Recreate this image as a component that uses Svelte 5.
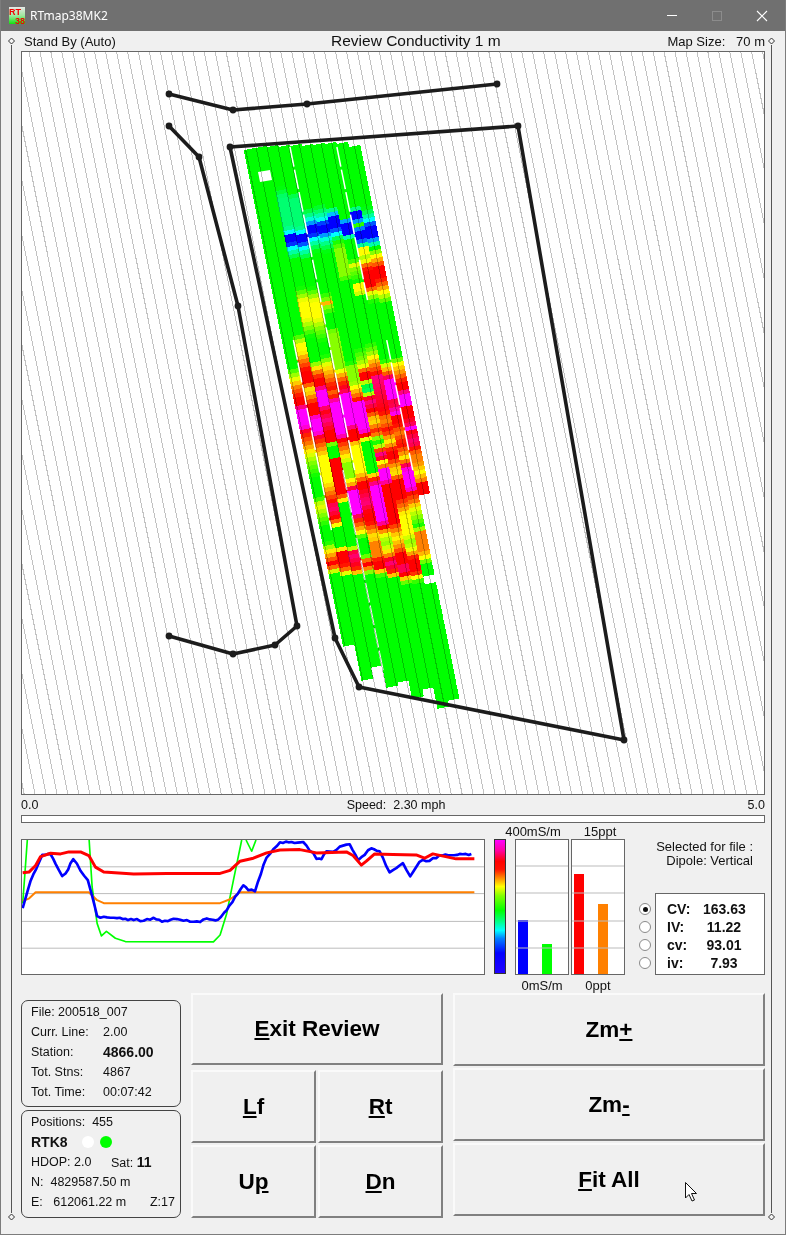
<script>
  const V = { b: 0, c: 0.17, t: 0.26, g: 0.33, l: 0.42, y: 0.5, o: 0.6, r: 0.7, p: 0.8, m: 0.9 };
  const COLS = [
    "149 g 365 g 372 l 378 y 385 o 395 r 402 r 408 m 424 m 430 r 442 o 450 y 460 l 475 g 495 g 503 y 512 l 525 g 540 g 548 y 555 o 561 r 566 o 572 g 643 g",
    "147 g 332 g 342 y 350 y 358 o 368 r 380 r 388 y 395 o 402 r 412 r 416 m 430 m 436 r 445 o 455 y 480 y 490 o 500 r 505 p 515 r 520 o 523 y 527 g 545 g 549 r 562 r 568 o 575 g 676 g",
    "146 g 185 g 195 t 225 t 230 c 233 b 241 b 246 c 252 t 258 g 285 g 293 l 299 y 316 y 325 l 335 g 358 g 365 y 370 o 376 r 384 r 388 m 403 m 408 r 418 p 430 r 438 r 443 g 455 g 458 r 490 r 496 o 502 g 545 g 548 r 552 p 565 r 569 o 574 g 666 g",
    "146 g 190 g 196 t 225 t 230 c 234 b 240 b 246 c 252 t 258 g 285 g 293 l 299 y 316 y 325 l 340 g 353 g 363 y 375 o 385 r 392 o 400 m 432 m 438 r 447 o 455 y 462 l 475 l 478 y 484 o 488 m 510 m 516 r 524 o 530 y 536 g 553 g 557 o 562 r 566 o 572 g 686 g",
    "145 g 205 g 212 t 219 c 224 b 232 b 237 c 243 t 250 g 290 g 298 l 302 o 305 l 312 g 325 g 330 l 352 l 365 l 375 o 383 r 392 p 393 m 422 m 428 r 438 r 442 y 470 y 476 o 480 r 485 r 500 p 510 r 520 r 535 y 540 o 553 o 558 r 565 r 570 y 574 g 680 g",
    "145 g 202 g 210 t 218 c 222 b 230 b 235 c 242 t 250 g 360 g 365 l 380 l 385 y 392 o 398 r 400 m 428 m 433 r 440 g 470 g 474 o 478 r 484 m 518 m 525 r 532 y 540 l 548 y 553 o 556 r 560 p 568 r 572 o 577 g 697 g",
    "144 g 205 g 211 c 215 b 226 b 232 c 238 g 248 l 273 l 280 g 345 g 358 l 365 y 370 r 378 r 381 g 387 t 391 g 394 r 400 p 408 r 414 o 418 y 424 o 430 r 436 l 441 g 445 y 449 r 452 p 458 r 460 y 464 o 466 m 478 m 483 r 520 r 528 o 535 y 545 o 552 r 560 r 566 p 572 r 577 y 582 g 688 g",
    "143 g 215 g 221 b 231 b 237 g 258 g 262 y 266 l 280 g 283 y 290 y 295 g 340 g 350 l 355 y 363 o 372 r 375 p 410 r 416 o 420 o 428 r 434 o 438 y 444 o 448 r 456 r 462 o 470 y 478 r 495 r 505 o 512 y 532 y 540 l 548 y 552 o 556 r 570 r 575 y 580 g 706 g",
    "143 g 206 g 210 b 218 b 222 l 226 c 228 b 237 b 242 c 247 y 252 y 257 l 262 o 268 r 285 r 290 y 295 l 300 g 358 g 364 y 370 o 376 p 378 m 396 m 400 r 405 p 412 m 414 r 422 r 430 o 442 r 450 o 456 y 464 p 468 m 486 m 490 r 500 o 505 y 515 l 525 g 530 o 548 o 555 y 562 g 575 g 575 x 583 x 583 g 698 g",
    "146 g 205 g 212 t 218 c 224 b 235 b 240 c 246 g 250 l 254 y 260 o 266 r 276 r 284 o 290 y 296 l 302 g 355 g 362 y 372 o 380 r 388 r 392 m 402 m 406 r 415 r 425 p 426 m 428 r 440 p 445 r 452 o 460 o 470 y 478 o 482 r 493 r"
  ];
  const COS = 0.196, COLW = 11.5;

  function ramp(v) {
    const stops = [[0, 0, 0, 255], [0.17, 0, 255, 255], [0.33, 0, 255, 0], [0.5, 255, 255, 0], [0.7, 255, 0, 0], [0.9, 255, 0, 255]];
    for (let i = 1; i < stops.length; i++) {
      if (v <= stops[i][0]) {
        const a = stops[i - 1], b = stops[i], f = (v - a[0]) / (b[0] - a[0]);
        return `rgb(${Math.round(a[1] + (b[1] - a[1]) * f)},${Math.round(a[2] + (b[2] - a[2]) * f)},${Math.round(a[3] + (b[3] - a[3]) * f)})`;
      }
    }
    return "rgb(255,0,255)";
  }

  const toW = (y, u) => (y - 147 + COS * u) / 0.98;

  const cells = [];
  COLS.forEach((s, i) => {
    const t = s.split(" ");
    const keys = [];
    for (let k = 0; k < t.length; k += 2) keys.push([+t[k], t[k + 1]]);
    const u = 3 + COLW * i, mid = u + COLW / 2;
    const last = keys[keys.length - 1][0];
    let seg = 0;
    for (let y = keys[0][0]; y < last; y += 4) {
      while (seg < keys.length - 2 && y >= keys[seg + 1][0]) seg++;
      const a = keys[seg], b = keys[seg + 1];
      if (a[1] === "x" || b[1] === "x") continue;
      const f = b[0] === a[0] ? 0 : (y - a[0]) / (b[0] - a[0]);
      const v = V[a[1]] + (V[b[1]] - V[a[1]]) * f;
      cells.push({ x: u, y: toW(y, mid), w: COLW + 0.4, h: 4.4, fill: ramp(v) });
    }
  });

  const seps = [[49, 147, 470], [95, 147, 300], [14.5, 340, 530], [106, 340, 470], [37.5, 470, 670]]
    .map(([u, a, b]) => ({ u, w0: toW(a, u), w1: toW(b, u) }));

  const hatch = [];
  for (let k = -60; k < 26; k++) {
    const x = 510.8 + 10.95 * k;
    hatch.push({ x1: x, x2: x + 0.2 * 744 });
  }

  const dots = [[169, 94], [233, 110], [307, 104], [497, 84], [230, 147], [518, 126], [624, 740], [359, 687], [335, 638],
    [169, 126], [199, 157], [238, 306], [297, 626], [275, 645], [233, 654], [169, 636]];

  const blueKeys = [[66,355],[90,270],[115,215],[125,195],[150,190],[165,220],[185,257],[195,250],[218,203],[240,240],[262,270],[275,320],[290,380],[320,382],[350,384],[400,388],[430,392],[460,384],[485,395],[520,386],[560,392],[590,396],[620,386],[655,390],[680,360],[705,320],[730,285],[745,300],[765,300],[800,200],[840,155],[910,155],[940,190],[950,205],[965,205],[980,180],[1000,185],[1020,168],[1050,160],[1075,210],[1115,172],[1140,182],[1170,247],[1210,218],[1232,260],[1260,212],[1290,210],[1320,195],[1425,190]];
  const bluePts = [];
  blueKeys.forEach((p, i) => {
    if (i === 0) return;
    const a = blueKeys[i - 1], n = Math.max(1, Math.round((p[0] - a[0]) / 9));
    for (let j = 0; j < n; j++) {
      const f = j / n, x = a[0] + (p[0] - a[0]) * f;
      const noise = 3 * Math.sin(x * 0.61) * Math.cos(x * 0.23);
      bluePts.push(`${x.toFixed(0)},${(a[1] + (p[1] - a[1]) * f + noise).toFixed(0)}`);
    }
  });
  const blue = bluePts.join(" ");

  const readings = [["CV:", "163.63", true], ["IV:", "11.22", false], ["cv:", "93.01", false], ["iv:", "7.93", false]];
  const gridY = [26, 53, 81, 108];
</script>

<div class="window">
  <header class="titlebar">
    <svg class="appicon" viewBox="0 0 16 17" width="16" height="17" aria-hidden="true">
      <defs>
        <linearGradient id="ic" x1="0" y1="0" x2="0" y2="1">
          <stop offset="0" stop-color="#e8e8e8" />
          <stop offset="0.5" stop-color="#9fe89f" />
          <stop offset="1" stop-color="#10e010" />
        </linearGradient>
      </defs>
      <rect width="16" height="17" fill="url(#ic)" />
      <text x="0" y="8" class="ictext">RT</text>
      <text x="6" y="16.5" class="ictext">38</text>
    </svg>
    <span class="apptitle">RTmap38MK2</span>
    <div class="winbtns">
      <svg width="12" height="12" viewBox="0 0 12 12" aria-hidden="true"><path d="M1 5.5H11" stroke="#fff" stroke-width="1" /></svg>
      <svg width="12" height="12" viewBox="0 0 12 12" aria-hidden="true"><rect x="1.5" y="1.5" width="9" height="9" fill="none" stroke="#8c8c8c" /></svg>
      <svg width="12" height="12" viewBox="0 0 12 12" aria-hidden="true"><path d="M1 1L11 11M11 1L1 11" stroke="#fff" stroke-width="1.1" /></svg>
    </div>
  </header>

  <main class="content">
    <div class="status">
      <span class="standby">Stand By (Auto)</span>
      <span class="maptitle">Review Conductivity 1 m</span>
      <span class="mapsize">Map Size: &nbsp;&nbsp;70 m</span>
    </div>

    <svg class="map" viewBox="22 52 742 742" aria-label="Map">
      <g transform="translate(240 147) rotate(-11.31)" shape-rendering="crispEdges">
        {#each cells as c}
          <rect x={c.x} y={c.y} width={c.w} height={c.h} fill={c.fill} />
        {/each}
      </g>
      <g transform="translate(240 147) rotate(-11.31)">
        {#each seps as s}
          <line x1={s.u} x2={s.u} y1={s.w0} y2={s.w1} class="sep" />
        {/each}
      </g>
      <polygon points="258,172 270,170 272,180 260,182" fill="#fff" />
      <g class="hatch" shape-rendering="crispEdges">
        {#each hatch as h}
          <line x1={h.x1} y1="52" x2={h.x2} y2="796" />
        {/each}
      </g>
      <g class="track">
        <polyline points="169,94 233,110 307,104 497,84" />
        <polygon points="230,147 518,126 624,740 359,687 335,638" />
        <polyline points="169,126 199,157 238,306 297,626 275,645 233,654 169,636" />
      </g>
      {#each dots as d}
        <circle cx={d[0]} cy={d[1]} r="3.4" fill="#1c1c1c" />
      {/each}
    </svg>

    <div class="speedrow">
      <span>0.0</span>
      <span class="speed">Speed: &nbsp;2.30 mph</span>
      <span>5.0</span>
    </div>
    <div class="speedbar"></div>

    <section class="charts">
      <svg class="chart" viewBox="64 148 1390 405" preserveAspectRatio="none" aria-label="Trend chart">
        <g class="gl">
          <line x1="64" x2="1454" y1="229" y2="229" />
          <line x1="64" x2="1454" y1="310" y2="310" />
          <line x1="64" x2="1454" y1="394" y2="394" />
          <line x1="64" x2="1454" y1="475" y2="475" />
        </g>
        <polyline class="tr green" points="66,340 72,260 80,148" />
        <polyline class="tr green" points="266,148 275,290 290,400 303,438 318,424 345,445 375,455 640,456 660,435 680,370 700,270 725,148" />
        <polyline class="tr green" points="738,148 755,182 768,148" />
        <polyline class="tr orange" points="66,332 85,325 105,306 265,306 290,330 310,339 660,339 690,327 720,306 1425,306" />
        <polyline class="tr blue" points={blue} />
        <polyline class="tr red" points="66,247 85,245 105,225 120,198 150,188 180,190 205,184 240,184 265,195 285,230 310,245 400,251 500,249 660,249 690,240 720,212 760,203 800,187 840,178 900,177 950,187 1040,184 1060,195 1085,224 1100,212 1125,190 1180,192 1250,193 1275,203 1300,190 1370,205 1425,205" />
      </svg>

      <div class="barsblock">
        <div class="toplabels"><span class="lab400">400mS/m</span><span class="lab15">15ppt</span></div>
        <div class="barsrow">
          <div class="colorbar"></div>
          <svg class="barpanel first" viewBox="0 0 52 134" aria-hidden="true">
            <rect x="2" y="80" width="10" height="54" fill="#0000ff" />
            <rect x="26" y="104" width="10" height="30" fill="#00ff00" />
            {#each gridY as y}<line x1="0" x2="52" y1={y} y2={y} class="barline" />{/each}
          </svg>
          <svg class="barpanel" viewBox="0 0 52 134" aria-hidden="true">
            <rect x="2" y="34" width="10" height="100" fill="#ff0000" />
            <rect x="26" y="64" width="10" height="70" fill="#ff8000" />
            {#each gridY as y}<line x1="0" x2="52" y1={y} y2={y} class="barline" />{/each}
          </svg>
        </div>
        <div class="botlabels"><span>0mS/m</span><span>0ppt</span></div>
      </div>

      <div class="selected">
        <div class="seltext">Selected for file :<br />Dipole: Vertical</div>
        <div class="readrow">
          <div class="radios">
            {#each readings as r}
              <span class="radio" class:on={r[2]}></span>
            {/each}
          </div>
          <div class="readout">
            {#each readings as r}
              <span class="rl">{r[0]}</span><span class="rv">{r[1]}</span>
            {/each}
          </div>
        </div>
      </div>
    </section>

    <section class="bottom">
      <div class="panels">
        <div class="panel">
          <div class="row"><span>File:&nbsp;200518_007</span></div>
          <div class="row"><span class="k">Curr. Line:</span><span>2.00</span></div>
          <div class="row"><span class="k">Station:</span><b class="big">4866.00</b></div>
          <div class="row"><span class="k">Tot. Stns:</span><span>4867</span></div>
          <div class="row"><span class="k">Tot. Time:</span><span>00:07:42</span></div>
        </div>
        <div class="panel tall">
          <div class="row"><span>Positions: &nbsp;455</span></div>
          <div class="row rtk"><b>RTK8</b><i class="led white"></i><i class="led lime"></i></div>
          <div class="row"><span class="hdop">HDOP: 2.0</span><span>Sat:&nbsp;<b class="big">11</b></span></div>
          <div class="row"><span>N: &nbsp;4829587.50 m</span></div>
          <div class="row between"><span>E: &nbsp;&nbsp;612061.22 m</span><span>Z:17</span></div>
        </div>
      </div>

      <div class="padgrid">
        <button class="btn wide"><u>E</u>xit Review</button>
        <button class="btn"><u>L</u>f</button>
        <button class="btn"><u>R</u>t</button>
        <button class="btn"><span>U<u>p</u></span></button>
        <button class="btn"><u>D</u>n</button>
      </div>

      <div class="zoomcol">
        <button class="btn">Zm<u>+</u></button>
        <button class="btn">Zm<u>-</u></button>
        <button class="btn"><u>F</u>it All</button>
      </div>
    </section>
  </main>

  <svg class="overlay" viewBox="0 0 786 1235" aria-hidden="true">
    <g class="rail">
      <line x1="11.5" x2="11.5" y1="45" y2="1213" />
      <line x1="771.5" x2="771.5" y1="45" y2="1213" />
      <path d="M11.5 38 L14.5 41 L11.5 44 L8.5 41Z" />
      <path d="M771.5 38 L774.5 41 L771.5 44 L768.5 41Z" />
      <path d="M11.5 1214 L14.5 1217 L11.5 1220 L8.5 1217Z" />
      <path d="M771.5 1214 L774.5 1217 L771.5 1220 L768.5 1217Z" />
    </g>
    <path d="M685.5 1182.5 V1198 L689 1194.5 L692 1201 L694.5 1200 L691.5 1193.5 H696.5 Z" fill="#fff" stroke="#111" stroke-width="1" />
  </svg>
</div>

<style>
  :global(body) { margin: 0; background: #f0f0f0; }
  .window {
    position: relative;
    width: 786px;
    height: 1235px;
    box-sizing: border-box;
    border: 1px solid #7c7c7c;
    border-top: 0;
    background: #f0f0f0;
    color: #111;
    font-family: "Liberation Sans", Arial, sans-serif;
    font-size: 12.5px;
    overflow: hidden;
  }
  .titlebar {
    height: 31px;
    background: #707070;
    display: flex;
    align-items: center;
    padding-left: 9px;
    padding-right: 18px;
    margin: 0 -1px;
    color: #fff;
  }
  .appicon { margin-right: 5px; }
  .ictext { font: bold 9px "Liberation Sans", sans-serif; fill: #f00000; }
  .apptitle { font-family: "Noto Sans", sans-serif; font-size: 12px; }
  .winbtns { margin-left: auto; display: flex; gap: 33px; }
  .content { padding: 0 20px; }
  .status {
    height: 20px;
    display: grid;
    grid-template-columns: 310px 1fr auto;
    align-items: center;
    font-size: 13px;
  }
  .standby { padding-left: 3px; }
  .maptitle { font-size: 15.5px; }
  .map {
    display: block;
    width: 744px;
    height: 744px;
    box-sizing: border-box;
    border: 1px solid #666;
    background: #fff;
  }
  .sep { stroke: #fff; stroke-width: 1.5; stroke-dasharray: 20 3; }
  .hatch { mix-blend-mode: multiply; }
  .hatch line { stroke: #c2c2c2; stroke-width: 1; }
  .track polyline, .track polygon { fill: none; stroke: #1c1c1c; stroke-width: 3.6; stroke-linejoin: round; }
  .speedrow {
    height: 20px;
    display: grid;
    grid-template-columns: 1fr auto 1fr;
    align-items: center;
    font-size: 12.5px;
  }
  .speedrow span:last-child { text-align: right; }
  .speed { margin-left: 6px; }
  .speedbar {
    height: 8px;
    box-sizing: border-box;
    border: 1px solid #666;
    background: #fff;
  }
  .charts {
    height: 170px;
    display: flex;
    align-items: flex-start;
  }
  .chart {
    display: block;
    flex: none;
    width: 464px;
    height: 136px;
    margin-top: 16px;
    box-sizing: border-box;
    border: 1px solid #666;
    background: #fff;
  }
  .gl line { stroke: #bbb; stroke-width: 3; }
  .tr { fill: none; stroke-linejoin: round; }
  .green { stroke: #00ff00; stroke-width: 5; }
  .orange { stroke: #ff8000; stroke-width: 6; }
  .blue { stroke: #0000ff; stroke-width: 8; }
  .red { stroke: #ff0000; stroke-width: 9; }
  .barsblock { margin-left: 9px; flex: none; width: 131px; font-size: 13px; }
  .toplabels { display: flex; height: 16px; align-items: center; padding-top: 1px; box-sizing: border-box; }
  .lab400 { flex: none; width: 78px; text-align: center; }
  .lab15 { flex: none; width: 56px; text-align: center; }
  .barsrow { display: flex; align-items: flex-start; }
  .colorbar {
    flex: none;
    width: 12px;
    height: 135px;
    box-sizing: border-box;
    border: 1px solid #333;
    margin-right: 9px;
    background: linear-gradient(to bottom, #ff00ff 0%, #ff00a0 8%, #ff0000 16%, #ff1000 22%, #ff8000 28%, #ffff00 35%, #80ff00 42%, #00ff00 53%, #00ff80 61%, #00ffff 68%, #0080ff 74%, #0000ff 85%, #2000ff 100%);
  }
  .barpanel {
    display: block;
    flex: none;
    width: 54px;
    height: 136px;
    box-sizing: border-box;
    border: 1px solid #666;
    background: #fff;
  }
  .barpanel.first { margin-right: 2px; }
  .barline { stroke: #bbb; stroke-width: 1; }
  .botlabels { display: flex; height: 20px; align-items: center; padding-left: 20px; }
  .botlabels span { flex: none; width: 56px; text-align: center; }
  .selected { margin-left: 14px; flex: none; width: 126px; font-size: 13px; }
  .seltext { margin-top: 17px; height: 53px; line-height: 14px; text-align: right; padding-right: 12px; }
  .readrow { display: flex; }
  .radios { flex: none; width: 16px; padding-top: 10px; display: flex; flex-direction: column; }
  .radio {
    flex: none;
    box-sizing: border-box;
    width: 12px;
    height: 12px;
    margin-bottom: 6px;
    border-radius: 50%;
    border: 1px solid #8a8a8a;
    background: #fff;
    display: flex;
    align-items: center;
    justify-content: center;
  }
  .radio.on::after { content: ""; width: 5px; height: 5px; border-radius: 50%; background: #111; }
  .readout {
    flex: none;
    width: 110px;
    height: 82px;
    box-sizing: border-box;
    border: 1px solid #666;
    background: #fff;
    padding: 6px 0 0 11px;
    display: grid;
    grid-template-columns: 36px 42px;
    grid-auto-rows: 18px;
    align-items: center;
    font-weight: bold;
    font-size: 14px;
  }
  .rv { text-align: center; }
  .bottom { display: flex; gap: 10px; }
  .panels { flex: none; width: 160px; margin-top: 7px; display: flex; flex-direction: column; gap: 3px; }
  .panel {
    height: 107px;
    box-sizing: border-box;
    border: 1px solid #444;
    border-radius: 7px;
    padding: 1px 5px 0 9px;
  }
  .panel.tall { height: 108px; }
  .row { height: 20px; display: flex; align-items: center; white-space: nowrap; }
  .k { width: 72px; }
  .big { font-size: 14px; }
  .rtk b { font-size: 14px; width: 51px; }
  .led { width: 12px; height: 12px; border-radius: 50%; margin-right: 6px; }
  .white { background: #fff; }
  .lime { background: #00ff00; }
  .hdop { width: 80px; }
  .between { justify-content: space-between; }
  .padgrid {
    flex: none;
    width: 252px;
    display: grid;
    grid-template-columns: 125px 125px;
    grid-template-rows: 75px 73px 73px;
    column-gap: 2px;
    row-gap: 2px;
  }
  .padgrid .wide { grid-column: 1 / 3; margin-bottom: 3px; }
  .zoomcol { flex: none; width: 312px; display: flex; flex-direction: column; gap: 2px; }
  .zoomcol .btn { height: 73px; }
  .btn {
    padding: 0;
    background: #f0f0f0;
    border: 2px solid;
    border-color: #fafafa #808080 #808080 #fafafa;
    color: #000;
    font-family: "Liberation Sans", Arial, sans-serif;
    font-weight: bold;
    font-size: 22.5px;
  }
  .overlay { position: absolute; left: -1px; top: 0; width: 786px; height: 1235px; pointer-events: none; }
  .rail line { stroke: #555; stroke-width: 1; }
  .rail path { fill: #f4f4f4; stroke: #333; stroke-width: 1; }
</style>
